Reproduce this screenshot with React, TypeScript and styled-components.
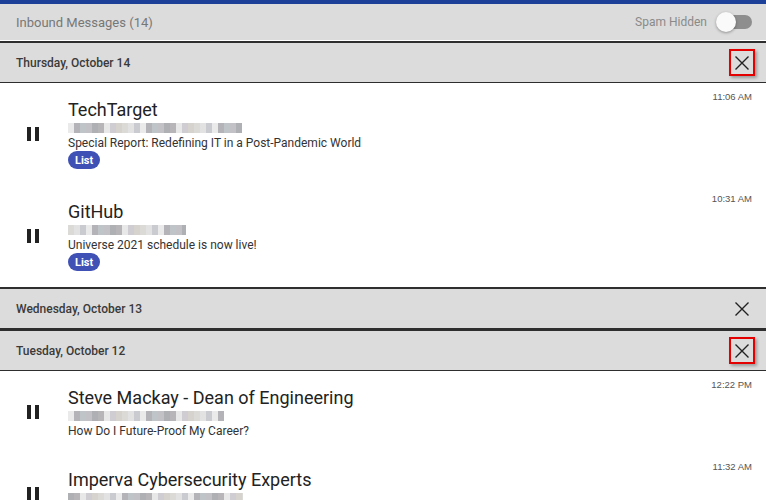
import React from 'react'
import styled, { createGlobalStyle, css } from 'styled-components'

const GlobalStyle = createGlobalStyle`
  html, body {
    margin: 0;
    padding: 0;
    background: #fff;
    overflow: hidden;
  }
  body {
    font-family: Roboto, "Liberation Sans", Arial, sans-serif;
  }
`

type Message = {
  from: string
  emailWidth: number
  subject: string
  time: string
  list?: boolean
}

type Day = {
  label: string
  flagged?: boolean
  messages: Message[]
}

const days: Day[] = [
  {
    label: 'Thursday, October 14',
    flagged: true,
    messages: [
      {
        from: 'TechTarget',
        emailWidth: 174,
        subject: 'Special Report: Redefining IT in a Post-Pandemic World',
        time: '11:06 AM',
        list: true,
      },
      {
        from: 'GitHub',
        emailWidth: 118,
        subject: 'Universe 2021 schedule is now live!',
        time: '10:31 AM',
        list: true,
      },
    ],
  },
  { label: 'Wednesday, October 13', messages: [] },
  {
    label: 'Tuesday, October 12',
    flagged: true,
    messages: [
      {
        from: 'Steve Mackay - Dean of Engineering',
        emailWidth: 156,
        subject: 'How Do I Future-Proof My Career?',
        time: '12:22 PM',
      },
      {
        from: 'Imperva Cybersecurity Experts',
        emailWidth: 175,
        subject: 'Protect your applications and APIs',
        time: '11:32 AM',
      },
    ],
  },
]

// pixelated (redacted) e-mail address colours
const mosaic = ['#e2e2e2', '#c2c2c6', '#d6d3cf', '#b3b3b8', '#e8e8e8', '#cacbd0', '#aeb0b4', '#dcdad6', '#bfc4c8', '#cfcdd2', '#eaeaea', '#b8b5b8']

function blurGradient(width: number, seed: number) {
  const stops: string[] = []
  const cell = 6
  for (let x = 0, i = seed; x < width; x += cell, i += 5) {
    const c = mosaic[i % mosaic.length]
    stops.push(`${c} ${x}px`, `${c} ${Math.min(x + cell, width)}px`)
  }
  return `linear-gradient(90deg, ${stops.join(', ')})`
}

function PauseIcon() {
  return (
    <svg width="24" height="24" viewBox="0 0 24 24">
      <path d="M6 19h4V5H6v14zm8-14v14h4V5h-4z" fill="#222" />
    </svg>
  )
}

function CloseIcon() {
  return (
    <svg width="20" height="20" viewBox="0 0 20 20">
      <path d="M3.5 3.5L16.5 16.5M16.5 3.5L3.5 16.5" stroke="#222" strokeWidth="1.4" fill="none" />
    </svg>
  )
}

export default function App() {
  return (
    <>
      <GlobalStyle />
      <Page>
        <TopBar />
        <Toolbar>
          <ToolbarTitle>Inbound Messages (14)</ToolbarTitle>
          <SpamToggle>
            <span>Spam Hidden</span>
            <Switch>
              <Track />
              <Thumb />
            </Switch>
          </SpamToggle>
        </Toolbar>
        {days.map((day) => (
          <section key={day.label}>
            <DayHeader>
              <span>{day.label}</span>
              <CloseButton $flagged={!!day.flagged}>
                <CloseIcon />
              </CloseButton>
            </DayHeader>
            {day.messages.map((m, i) => (
              <Row key={m.from}>
                <IconCol>
                  <PauseIcon />
                </IconCol>
                <Body>
                  <From>{m.from}</From>
                  <Email style={{ width: m.emailWidth, background: blurGradient(m.emailWidth, i + m.from.length) }} />
                  <Subject>{m.subject}</Subject>
                  {m.list && <Chip>List</Chip>}
                </Body>
                <Time>{m.time}</Time>
              </Row>
            ))}
          </section>
        ))}
      </Page>
    </>
  )
}

const Page = styled.div`
  width: 766px;
  height: 500px;
  overflow: hidden;
`

const TopBar = styled.div`
  height: 4px;
  background: #1c3f97;
`

const Toolbar = styled.div`
  height: 36px;
  display: flex;
  align-items: center;
  justify-content: space-between;
  padding: 0 14px 0 16px;
  background: #dcdcdc;
  border-bottom: 1px solid #fff;
`

const ToolbarTitle = styled.span`
  font-size: 13px;
  color: #777;
`

const SpamToggle = styled.div`
  display: flex;
  align-items: center;
  gap: 9px;
  font-size: 12px;
  color: #8a8a8a;
`

const Switch = styled.div`
  position: relative;
  width: 36px;
  height: 20px;
  display: flex;
  align-items: center;
`

const Track = styled.div`
  margin-left: 2px;
  width: 34px;
  height: 14px;
  border-radius: 7px;
  background: #8e8e8e;
`

const Thumb = styled.div`
  position: absolute;
  left: 0;
  top: 0;
  width: 20px;
  height: 20px;
  border-radius: 50%;
  background: #fafafa;
  box-shadow: 0 1px 3px rgba(0, 0, 0, 0.35);
`

const DayHeader = styled.div`
  height: 39px;
  display: flex;
  align-items: center;
  justify-content: space-between;
  padding: 0 11px 0 16px;
  background: #dcdcdc;
  border-top: 2px solid #2e2e2e;
  border-bottom: 1px solid #2e2e2e;
  font-size: 12px;
  font-weight: 500;
  color: #3a3a3a;
`

const CloseButton = styled.div<{ $flagged: boolean }>`
  width: 22px;
  height: 23px;
  display: flex;
  align-items: center;
  justify-content: center;
  border: 2px solid transparent;
  ${({ $flagged }) =>
    $flagged &&
    css`
      border-color: #e50000;
      box-shadow: 2px 2px 3px rgba(0, 0, 0, 0.3);
    `}
`

const Row = styled.div`
  display: flex;
  align-items: stretch;
  padding: 8px 14px 14px 0;
`

const IconCol = styled.div`
  width: 68px;
  padding-left: 21px;
  box-sizing: border-box;
  display: flex;
  align-items: center;
  padding-top: 6px;
`

const Body = styled.div`
  flex: 1;
  display: flex;
  flex-direction: column;
  align-items: flex-start;
  padding-top: 8px;
`

const From = styled.div`
  font-size: 18px;
  line-height: 22px;
  color: #222;
`

const Email = styled.div`
  height: 10px;
  margin: 2px 0 3px;
  filter: blur(0.4px);
`

const Subject = styled.div`
  font-size: 12px;
  line-height: 15px;
  color: #333;
`

const Chip = styled.span`
  margin-bottom: 2px;
  height: 18px;
  padding: 0 7px;
  display: inline-flex;
  align-items: center;
  border-radius: 9px;
  background: #3f51b5;
  color: #fff;
  font-size: 11px;
  font-weight: 700;
`

const Time = styled.div`
  align-self: flex-start;
  font-family: "Liberation Sans", Arial, sans-serif;
  font-size: 9.5px;
  line-height: 12px;
  color: #555;
`
